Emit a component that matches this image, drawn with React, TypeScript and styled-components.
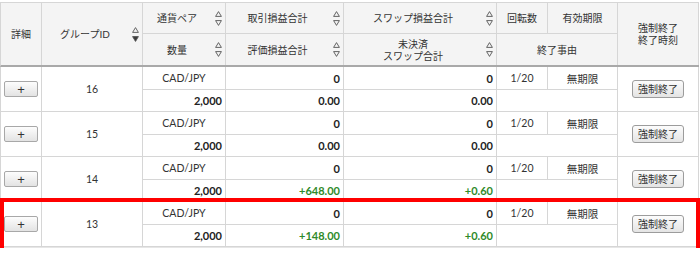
import React from 'react';
import styled, { createGlobalStyle, css } from 'styled-components';

const GlobalStyle = createGlobalStyle`
  html, body {
    margin: 0;
    padding: 0;
    background: #ffffff;
  }
  body {
    font-family: Lato, "Noto Sans CJK JP", sans-serif;
    color: #333;
  }
  * {
    box-sizing: border-box;
  }
`;

const COLUMNS = '41px 101px 83px 118px 153px 51px 70px 81px';
const LINE = '#d6d6d6';
const GAIN = '#2f8a2a';

const Page = styled.div`
  width: 700px;
  padding-top: 2px;
`;

const Table = styled.div`
  width: 699px;
  border-bottom: 1px solid #e6e6e6;
`;

const HeadGrid = styled.div`
  display: grid;
  grid-template-columns: ${COLUMNS};
  grid-template-rows: 31px 31px;
  border-top: 1px solid ${LINE};
  border-left: 1px solid ${LINE};
  border-bottom: 2px solid #a9a9a9;
  background: #f4f4f4;
`;

const HeadCell = styled.div<{ $col: string; $row: string; $edge?: boolean }>`
  grid-column: ${(p) => p.$col};
  grid-row: ${(p) => p.$row};
  display: flex;
  align-items: center;
  border-right: 1px solid ${LINE};
  border-bottom: ${(p) => (p.$edge ? 'none' : `1px solid ${LINE}`)};
  font-size: 10px;
  line-height: 12px;
  color: #333;
`;

const HeadLabel = styled.div`
  flex: 1;
  text-align: center;
`;

const SortBox = styled.div`
  width: 14px;
  display: flex;
  flex-direction: column;
  align-items: center;
  gap: 3px;
`;

const Group = styled.div<{ $marked?: boolean }>`
  position: relative;
  display: grid;
  grid-template-columns: ${COLUMNS};
  grid-template-rows: 23px 22px;
  border-left: 1px solid ${LINE};
  background: #fff;

  ${(p) =>
    p.$marked &&
    css`
      &::after {
        content: '';
        position: absolute;
        top: -4px;
        bottom: -7px;
        left: -1px;
        right: -1px;
        border: 4px solid #ff0000;
        pointer-events: none;
      }
    `}
`;

const Cell = styled.div<{ $col: string; $row: string; $align?: 'left' | 'center' | 'right' }>`
  grid-column: ${(p) => p.$col};
  grid-row: ${(p) => p.$row};
  display: flex;
  align-items: center;
  justify-content: ${(p) =>
    p.$align === 'right' ? 'flex-end' : p.$align === 'left' ? 'flex-start' : 'center'};
  padding: 0 3px;
  border-right: 1px solid ${LINE};
  border-bottom: 1px solid ${LINE};
  font-size: 10.5px;
  color: #333;
`;

const Amount = styled.span<{ $gain?: boolean }>`
  font-size: 11px;
  font-weight: 700;
  color: ${(p) => (p.$gain ? GAIN : '#222')};
`;

const PlusButton = styled.button`
  width: 36px;
  height: 16px;
  padding: 0;
  border: 1px solid #a8a8a8;
  border-radius: 2px;
  background: linear-gradient(#fdfdfd, #e3e3e3);
  font-family: 'Liberation Sans', sans-serif;
  font-size: 13px;
  line-height: 13px;
  color: #333;
`;

const StopButton = styled.button`
  width: 52px;
  height: 18px;
  padding: 0;
  border: 1px solid #9c9c9c;
  border-radius: 3px;
  background: linear-gradient(#fcfcfc, #e4e4e4);
  font-family: 'Noto Sans CJK JP', sans-serif;
  font-size: 10px;
  line-height: 14px;
  color: #333;
`;

const Tri = ({ up, filled }: { up?: boolean; filled?: boolean }) => (
  <svg width="7" height="6" viewBox="0 0 7 6">
    <path
      d={up ? 'M3.5 0.6 L6.4 5.4 L0.6 5.4 Z' : 'M0.6 0.6 L6.4 0.6 L3.5 5.4 Z'}
      fill={filled ? '#3a3a3a' : 'none'}
      stroke="#555"
      strokeWidth="0.9"
      strokeLinejoin="round"
    />
  </svg>
);

const Sort = ({ active }: { active?: boolean }) => (
  <SortBox>
    <Tri up />
    <Tri filled={active} />
  </SortBox>
);

type Row = { id: number; evalPnl: string; unsettled: string; marked?: boolean };

const rows: Row[] = [
  { id: 16, evalPnl: '0.00', unsettled: '0.00' },
  { id: 15, evalPnl: '0.00', unsettled: '0.00' },
  { id: 14, evalPnl: '+648.00', unsettled: '+0.60' },
  { id: 13, evalPnl: '+148.00', unsettled: '+0.60', marked: true },
];

const isGain = (v: string) => v.startsWith('+');

export default function App() {
  return (
    <Page>
      <GlobalStyle />
      <Table>
        <HeadGrid>
          <HeadCell $col="1" $row="1 / 3" $edge>
            <HeadLabel>詳細</HeadLabel>
          </HeadCell>
          <HeadCell $col="2" $row="1 / 3" $edge>
            <HeadLabel>グループID</HeadLabel>
            <Sort active />
          </HeadCell>
          <HeadCell $col="3" $row="1">
            <HeadLabel>通貨ペア</HeadLabel>
            <Sort />
          </HeadCell>
          <HeadCell $col="4" $row="1">
            <HeadLabel>取引損益合計</HeadLabel>
            <Sort />
          </HeadCell>
          <HeadCell $col="5" $row="1">
            <HeadLabel>スワップ損益合計</HeadLabel>
            <Sort />
          </HeadCell>
          <HeadCell $col="6" $row="1">
            <HeadLabel>回転数</HeadLabel>
          </HeadCell>
          <HeadCell $col="7" $row="1">
            <HeadLabel>有効期限</HeadLabel>
          </HeadCell>
          <HeadCell $col="8" $row="1 / 3" $edge>
            <HeadLabel>
              強制終了
              <br />
              終了時刻
            </HeadLabel>
          </HeadCell>
          <HeadCell $col="3" $row="2" $edge>
            <HeadLabel>数量</HeadLabel>
            <Sort />
          </HeadCell>
          <HeadCell $col="4" $row="2" $edge>
            <HeadLabel>評価損益合計</HeadLabel>
            <Sort />
          </HeadCell>
          <HeadCell $col="5" $row="2" $edge>
            <HeadLabel>
              未決済
              <br />
              スワップ合計
            </HeadLabel>
            <Sort />
          </HeadCell>
          <HeadCell $col="6 / 8" $row="2" $edge>
            <HeadLabel>終了事由</HeadLabel>
          </HeadCell>
        </HeadGrid>

        {rows.map((r) => (
          <Group key={r.id} $marked={r.marked}>
            <Cell $col="1" $row="1 / 3">
              <PlusButton>+</PlusButton>
            </Cell>
            <Cell $col="2" $row="1 / 3">
              {r.id}
            </Cell>
            <Cell $col="3" $row="1">
              CAD/JPY
            </Cell>
            <Cell $col="4" $row="1" $align="right">
              <Amount>0</Amount>
            </Cell>
            <Cell $col="5" $row="1" $align="right">
              <Amount>0</Amount>
            </Cell>
            <Cell $col="6" $row="1">
              1/20
            </Cell>
            <Cell $col="7" $row="1">
              無期限
            </Cell>
            <Cell $col="8" $row="1 / 3">
              <StopButton>強制終了</StopButton>
            </Cell>
            <Cell $col="3" $row="2" $align="right">
              <Amount>2,000</Amount>
            </Cell>
            <Cell $col="4" $row="2" $align="right">
              <Amount $gain={isGain(r.evalPnl)}>{r.evalPnl}</Amount>
            </Cell>
            <Cell $col="5" $row="2" $align="right">
              <Amount $gain={isGain(r.unsettled)}>{r.unsettled}</Amount>
            </Cell>
            <Cell $col="6 / 8" $row="2" />
          </Group>
        ))}
      </Table>
    </Page>
  );
}
